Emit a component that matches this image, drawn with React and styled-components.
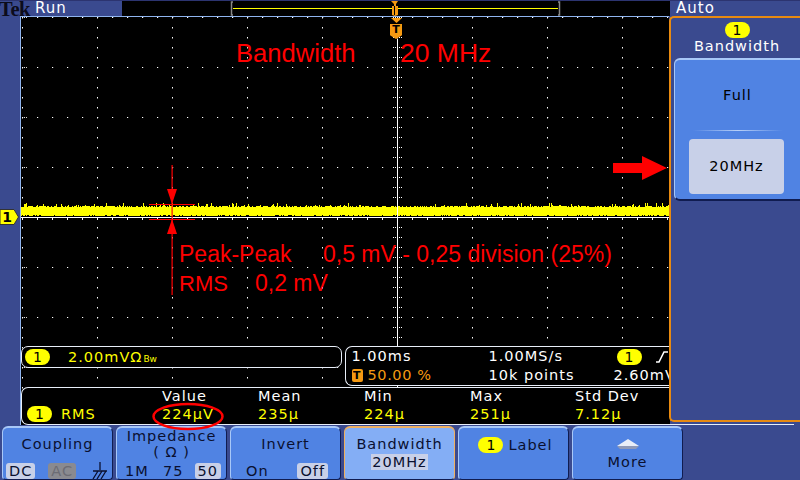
import React from "react";
import styled, { createGlobalStyle } from "styled-components";

const Global = createGlobalStyle`
  html, body { margin: 0; padding: 0; background: #3a4a90; }
  #root { width: 800px; height: 480px; overflow: hidden; }
  * { box-sizing: border-box; }
`;

const Screen = styled.div`
  width: 800px; height: 480px; background: #3a4a8f; display: flex; flex-direction: column;
  font-family: "DejaVu Sans", sans-serif; font-size: 14.5px; letter-spacing: 1px; overflow: hidden; position: relative;
`;
const Header = styled.header`
  height: 16px; flex: none; display: flex; align-items: flex-start; border-top: 1px solid #2c3470;
`;
const Logo = styled.div`
  width: 35px; font: bold 20.5px/16px "Liberation Serif", serif; color: #0c0c1c; letter-spacing: -.4px; text-indent: -1px;
`;
const Status = styled.div`
  width: 87px; color: #fff; font-size: 15px; line-height: 14px;
`;
const RecordView = styled.svg`
  width: 548px; height: 15px; background: #000; display: block; flex: none;
`;
const AutoLabel = styled.div`
  flex: 1; color: #fff; font-size: 15px; line-height: 14px; padding-left: 6px;
`;
const Middle = styled.div`
  flex: none; height: 409px; display: flex;
`;
const Gutter = styled.div`
  width: 20px; flex: none; position: relative;
`;
const ChannelPin = styled.svg`
  position: absolute; left: 0; top: 191px;
`;
const PinLabel = styled.span`
  position: absolute; left: 1px; top: 194px; width: 13px; text-align: center; font: bold 14px/14px "DejaVu Sans", sans-serif; color: #000;
`;
const Scope = styled.main`
  flex: none; width: 649px; height: 409px; position: relative; background: #000; border-top: 1px solid #8fb4ee; border-left: 1px solid #8fb4ee;
  display: flex; flex-direction: column; justify-content: flex-end;
`;
const Graticule = styled.svg`
  position: absolute; left: -1px; top: -1px;
`;
const Notes = styled.svg`
  position: absolute; left: -1px; top: -1px; pointer-events: none; z-index: 4;
`;
const RedText = styled.div`
  position: absolute; color: #f00; font-family: "Liberation Sans", sans-serif; white-space: pre; z-index: 3; letter-spacing: 0;
  font-size: ${p => p.$size}px; line-height: 1; left: ${p => p.$x}px; top: ${p => p.$y}px;
`;
const TriggerFlag = styled.div`
  position: absolute; left: 369px; top: 7px; width: 12px; height: 15px; background: #f59a12; color: #000; z-index: 2; letter-spacing: 0;
  font: bold 11px/12px "DejaVu Sans", sans-serif; text-align: center;
  clip-path: polygon(0 0, 100% 0, 100% 75%, 50% 100%, 0 75%);
`;
const ReadoutRow = styled.div`
  display: flex; position: relative; z-index: 1; height: 41px; align-items: flex-start;
`;
const VerticalReadout = styled.div`
  width: 321px; height: 22px; background: #000; border: 1px solid #e8eef8; border-radius: 7px;
  color: #ff0; display: flex; align-items: center; padding-left: 3px;
`;
const HorizontalReadout = styled.div`
  width: 325px; height: 40px; margin-left: 3px; background: #000; border: 1px solid #e8eef8; border-right: 0;
  border-radius: 7px 0 0 7px; color: #fff; display: grid; grid-template-columns: 137px 125px 63px;
  grid-template-rows: 19px 19px; padding: 0 0 0 6px; overflow: hidden; line-height: 19px; white-space: nowrap;
`;
const Orange = styled.span`
  color: #f59a12; display: flex; align-items: center; gap: 5px; letter-spacing: .6px;
`;
const TrigBox = styled.span`
  width: 11px; height: 13px; background: #f59a12; color: #000; font: bold 11px/13px "DejaVu Sans", sans-serif; text-align: center; border-radius: 2px;
`;
const TrigSource = styled.span`
  display: flex; align-items: center; gap: 14px; padding-left: 3px;
`;
const Badge = styled.span`
  display: inline-block; width: 25px; height: 16px; border-radius: 8px; background: #ff0; color: #000; text-align: center;
  font: 14px/16px "DejaVu Sans", sans-serif; flex: none; letter-spacing: 0;
`;
const Scale = styled.span`
  margin-left: 18px;
`;
const Tiny = styled.span`
  font-size: 9px; letter-spacing: 0; margin-left: 1px;
`;
const Measure = styled.div`
  height: 38px; width: 773px; position: relative; z-index: 1;
  background: linear-gradient(to right, #000 648px, #3a4a8f 648px);
  border: 1px solid #e8eef8; border-right: 0; border-radius: 7px 0 0 7px;
  display: grid; grid-template-columns: 135px 96px 106px 106px 105px 96px; padding-left: 5px;
`;
const MCell = styled.div`
  display: flex; flex-direction: column; white-space: nowrap;
`;
const MHead = styled.span`
  color: #fff; height: 16px; line-height: 16px;
`;
const MValue = styled.span`
  color: #ff0; display: flex; align-items: center; gap: 9px; height: 20px; line-height: 20px;
`;
const Side = styled.aside`
  width: 131px; flex: none; height: 406px; border: 2px solid #e88a10; border-right: 0; border-radius: 5px 0 0 5px; position: relative; z-index: 2;
  background: #3a4a8f; display: flex; flex-direction: column; align-items: stretch; padding: 4px 0 0 3px; color: #fff;
`;
const SideTitle = styled.div`
  height: 36px; display: flex; flex-direction: column; align-items: center; line-height: 16px; gap: 0;
`;
const SideButton = styled.div`
  height: 143px; background: #5083e3; border-top: 2px solid #a8c8f8; border-left: 1px solid #a8c8f8;
  border-bottom: 2px solid #101c50; border-radius: 6px 0 0 6px; color: #000; display: flex; flex-direction: column; align-items: center;
`;
const FullLabel = styled.div`
  height: 70px; line-height: 70px;
`;
const Divider = styled.div`
  width: 90px; height: 1px; background: linear-gradient(90deg, #5083e3, #b8d0f8, #5083e3);
`;
const Selected = styled.div`
  width: 95px; height: 55px; margin-top: 8px; margin-right: 2px; background: #c8d0e8; border-radius: 4px; text-align: center; line-height: 55px;
`;
const Footer = styled.footer`
  flex: none; height: 55px; display: flex; gap: 3px; padding: 1px 0 0 2px;
`;
const SoftKey = styled.button`
  width: 111px; height: 54px; padding: 0; font: inherit; letter-spacing: inherit; color: #0a1030;
  background: ${p => p.$active ? "#84aef5" : "#5083e3"};
  border: 0; border-top: 2px solid ${p => p.$active ? "#f0b060" : "#a8c8f8"}; border-left: 1px solid ${p => p.$active ? "#f0b060" : "#a8c8f8"};
  border-right: 1px solid ${p => p.$active ? "#f0b060" : "#101c50"}; border-bottom: 1px solid #101c50; border-radius: 6px 6px 4px 4px;
  display: flex; flex-direction: column; align-items: center; justify-content: flex-start; overflow: hidden;
`;
const KeyTitle = styled.div`
  height: ${p => p.$h}px; line-height: ${p => p.$lh || p.$h}px; white-space: nowrap;
`;
const KeyOptions = styled.div`
  display: flex; align-items: center; justify-content: space-between; width: 100%; padding: 0 ${p => p.$pad || 3}px; height: 17px;
`;
const Opt = styled.span`
  padding: 0 3px; line-height: 16px; border-radius: 3px; background: ${p => p.$on ? "#c8d0e8" : p.$dim ? "#8a8a90" : "transparent"};
  color: ${p => p.$dim ? "#6c6c74" : "#0a1030"};
`;
const Highlight = styled.span`
  background: #c8d0e8; padding: 0 1px; line-height: 16px;
`;
const LabelRow = styled.div`
  display: flex; align-items: center; gap: 5px; height: 24px; margin-top: 5px; padding-left: 4px;
`;
const MoreArrow = styled.svg`
  margin-top: 11px; flex: none;
`;

const rng = (seed) => () => (seed = (seed * 16807) % 2147483647) / 2147483647;

function GridDots() {
  const cols = [], rows = [];
  for (let x = 22; x < 670; x += 15) cols.push(x);
  for (let y = 17; y < 425; y += 10) rows.push(y);
  const dots = [];
  for (let i = 0; i < 9; i++) {
    const yy = 17 + i * 50;
    cols.forEach(x => dots.push(<rect key={`h${i}${x}`} x={x} y={yy} width="1.2" height="1" fill="#fff" />));
    [2, 4].forEach(d => dots.push(<rect key={`hx${i}${d}`} x={22 + d} y={yy} width="1" height="1" fill="#ddd" />));
  }
  for (let k = 0; k < 9; k++) {
    const xx = 22 + k * 75;
    rows.forEach(y => dots.push(<rect key={`v${k}${y}`} x={xx} y={y} width="1" height="1.5" fill="#fff" />));
  }
  cols.forEach(x => dots.push(<rect key={`t${x}`} x={x} y="218" width="1" height="2" fill="#fff" />));
  rows.forEach(y => [393, 395, 399, 401].forEach(x => dots.push(<rect key={`c${x}${y}`} x={x} y={y} width="1" height="1" fill="#fff" />)));
  return dots;
}

function Noise() {
  const r = rng(4242);
  const bars = [];
  for (let x = 21; x < 669; x += 1) {
    const spike = r();
    const top = 206 + Math.floor(r() * 2) - (spike > 0.93 ? 3 : spike > 0.82 ? 1 : 0);
    const bot = 216 - (r() > 0.75 ? 1 : 0);
    bars.push(<rect key={x} x={x} y={top} width="1" height={bot - top} fill="#ff0" />);
  }
  return bars;
}

export default function App() {
  return (
    <Screen>
      <Global />
      <Header>
        <Logo>Tek</Logo>
        <Status>Run</Status>
        <RecordView viewBox="0 0 548 15">
          <path d="M111 1h-1.5v13H111" fill="none" stroke="#888" strokeWidth="1.5" />
          <path d="M436 1h1.5v13H436" fill="none" stroke="#888" strokeWidth="1.5" />
          <rect x="111" y="7" width="325" height="1" fill="#ff0" />
          <path d="M269 0h7l-2 3v2h2v9l-3 1-3-1V5h2V3z" fill="#f59a12" />
          <rect x="272" y="5" width="1" height="9" fill="#000" />
        </RecordView>
        <AutoLabel>Auto</AutoLabel>
      </Header>
      <Middle>
        <Gutter>
          <ChannelPin width="20" height="20" viewBox="0 0 20 20">
            <path d="M0 2.5h14l4.5 7.5-4.5 7.500H0z" fill="#ff0" stroke="#333" />
          </ChannelPin>
          <PinLabel>1</PinLabel>
        </Gutter>
        <Scope>
          <Graticule width="650" height="409" viewBox="20 16 650 409">
            <GridDots />
            <Noise />
            <rect x="21" y="217" width="648" height="1" fill="#fff" />
            <rect x="397" y="39" width="1" height="350" fill="#fff" />
            <path d="M391 18h11l-5.500 5z" fill="#f59a12" />
          </Graticule>
          <TriggerFlag>T</TriggerFlag>
          <Notes width="650" height="420" viewBox="20 16 650 420">
            <rect x="171.500" y="165" width="1.2" height="130" fill="#f00" />
            <rect x="149" y="204" width="46" height="1" fill="#f00" />
            <rect x="149" y="219" width="46" height="1" fill="#f00" />
            <path d="M167 189h10l-5 15zM167 234h10l-5-15z" fill="#f00" />
            <path d="M613 163h29v-7l25 12-25 12v-7h-29z" fill="#f00" />
            <ellipse cx="188" cy="416.500" rx="34.500" ry="12.500" fill="none" stroke="#f00" strokeWidth="2.500" />
          </Notes>
          <RedText $size={25.6} $x={215} $y={24}>{"Bandwidth"}</RedText>
          <RedText $size={26.5} $x={379} $y={23}>{"20 MHz"}</RedText>
          <RedText $size={23} $x={158} $y={226}>{"Peak-Peak"}</RedText>
          <RedText $size={23} $x={302} $y={226}>{"0,5 mV - 0,25 division (25%)"}</RedText>
          <RedText $size={22} $x={158} $y={256}>{"RMS"}</RedText>
          <RedText $size={23} $x={234} $y={255}>{"0,2 mV"}</RedText>
          <ReadoutRow>
            <VerticalReadout>
              <Badge>1</Badge>
              <Scale>2.00mVΩ<Tiny>Bw</Tiny></Scale>
            </VerticalReadout>
            <HorizontalReadout>
              <span>1.00ms</span>
              <span>1.00MS/s</span>
              <TrigSource>
                <Badge>1</Badge>
                <svg width="12" height="12" viewBox="0 0 12 12"><path d="M0 11h3l5-10h4" fill="none" stroke="#fff" strokeWidth="1.600" /></svg>
              </TrigSource>
              <Orange><TrigBox>T</TrigBox>50.00 %</Orange>
              <span>10k points</span>
              <span>2.60mV</span>
            </HorizontalReadout>
          </ReadoutRow>
          <Measure>
            <MCell><MHead /><MValue><Badge>1</Badge>RMS</MValue></MCell>
            <MCell><MHead>Value</MHead><MValue>224µV</MValue></MCell>
            <MCell><MHead>Mean</MHead><MValue>235µ</MValue></MCell>
            <MCell><MHead>Min</MHead><MValue>224µ</MValue></MCell>
            <MCell><MHead>Max</MHead><MValue>251µ</MValue></MCell>
            <MCell><MHead>Std Dev</MHead><MValue>7.12µ</MValue></MCell>
          </Measure>
        </Scope>
        <Side>
          <SideTitle>
            <Badge>1</Badge>
            Bandwidth
          </SideTitle>
          <SideButton>
            <FullLabel>Full</FullLabel>
            <Divider />
            <Selected>20MHz</Selected>
          </SideButton>
        </Side>
      </Middle>
      <Footer>
        <SoftKey>
          <KeyTitle $h={34} $lh={32}>Coupling</KeyTitle>
          <KeyOptions>
            <Opt $on>DC</Opt>
            <Opt $dim>AC</Opt>
            <svg width="20" height="17" viewBox="0 0 20 17"><path d="M11 0v8M4 9h14M9 9l-5 8M13 9l-5 8M17 9l-5 8" stroke="#0a1030" strokeWidth="1.300" fill="none" /></svg>
          </KeyOptions>
        </SoftKey>
        <SoftKey>
          <KeyTitle $h={16}>Impedance</KeyTitle>
          <KeyTitle $h={18} $lh={17}>( Ω )</KeyTitle>
          <KeyOptions $pad={5}>
            <Opt>1M</Opt>
            <Opt>75</Opt>
            <Opt $on>50</Opt>
          </KeyOptions>
        </SoftKey>
        <SoftKey>
          <KeyTitle $h={34} $lh={32}>Invert</KeyTitle>
          <KeyOptions $pad={12}>
            <Opt>On</Opt>
            <Opt $on>Off</Opt>
          </KeyOptions>
        </SoftKey>
        <SoftKey $active>
          <KeyTitle $h={26} $lh={32}>Bandwidth</KeyTitle>
          <Highlight>20MHz</Highlight>
        </SoftKey>
        <SoftKey>
          <LabelRow><Badge>1</Badge>Label</LabelRow>
        </SoftKey>
        <SoftKey>
          <MoreArrow width="24" height="12" viewBox="0 0 24 12"><path d="M1 7 12 0l11 7z" fill="#e8eef8" /><path d="M1 7h22l-3 3H4z" fill="#8f9ab8" /></MoreArrow>
          <KeyTitle $h={22}>More</KeyTitle>
        </SoftKey>
      </Footer>
    </Screen>
  );
}
